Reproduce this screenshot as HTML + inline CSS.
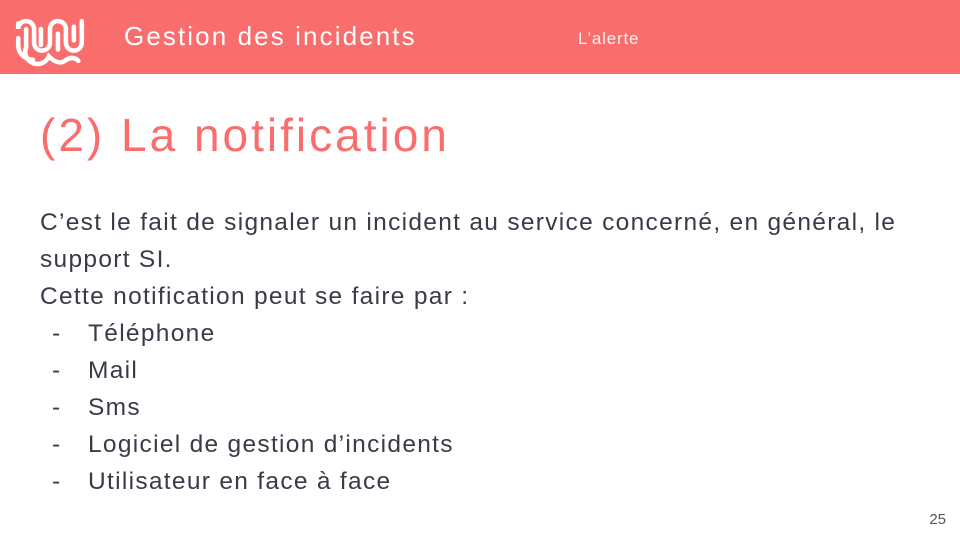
<!DOCTYPE html>
<html><head><meta charset="utf-8"><style>
body{margin:0;width:960px;height:540px;position:relative;background:#fff;font-family:"Liberation Sans",sans-serif;overflow:hidden}
.hdr{position:absolute;left:0;top:0;width:960px;height:74px;background:#f96d6d}
.t{position:absolute;left:124px;top:21px;color:#fff;font-size:26px;letter-spacing:2.1px}
.s{position:absolute;left:578px;top:29px;color:#fff;font-size:17px;opacity:.9;letter-spacing:0.8px}
h1{position:absolute;left:40px;top:108px;margin:0;font-weight:normal;color:#f96d6d;font-size:46px;letter-spacing:3px}
.b{position:absolute;left:40px;top:204px;color:#3a3a48;font-size:24.5px;line-height:37px;width:880px;letter-spacing:1.3px}
.li{position:relative;padding-left:48px}
.li:before{content:"-";position:absolute;left:12px}
.n{position:absolute;right:14px;top:511px;color:#555;font-size:15px}
</style></head><body>
<div class="hdr">
<svg width="100" height="74" style="position:absolute;left:0;top:0" viewBox="1 6 88 62" fill="none" stroke="#fff" stroke-width="4" stroke-linecap="round">
<path d="M17 25 V30 A7 7 0 0 1 31 30 V42 A7 7 0 0 0 45 42 V30 A7 7 0 0 1 59 30 V42 A7 7 0 0 0 73 42 V23"/>
<path d="M17 38 V44 A13 13 0 0 0 30 57"/>
<path d="M24 30 V46 A10 10 0 0 0 44 54 Q52 62 58 58 Q65 53 70 58"/>
<path d="M37 30 V44"/><path d="M52 34 V48"/><path d="M66 28 V40"/>
</svg>
<div class="t">Gestion des incidents</div>
<div class="s">L’alerte</div>
</div>
<h1>(2) La notification</h1>
<div class="b">
<div>C’est le fait de signaler un incident au service concerné, en général, le<br>support SI.</div>
<div>Cette notification peut se faire par :</div>
<div class="li">Téléphone</div>
<div class="li">Mail</div>
<div class="li">Sms</div>
<div class="li">Logiciel de gestion d’incidents</div>
<div class="li">Utilisateur en face à face</div>
</div>
<div class="n">25</div>
</body></html>
